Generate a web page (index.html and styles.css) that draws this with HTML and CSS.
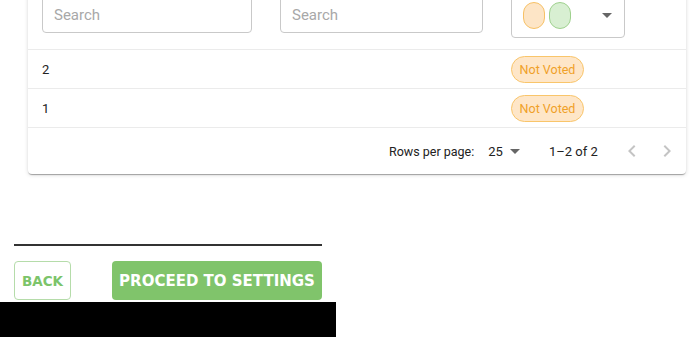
FILE: index.html
```html
<!DOCTYPE html>
<html>
<head>
<meta charset="utf-8">
<link rel="stylesheet" href="styles.css">
</head>
<body>
<div class="card">
  <div class="row filters">
    <div class="cell c1"><div class="input">Search</div></div>
    <div class="cell c2"><div class="input">Search</div></div>
    <div class="cell c3">
      <div class="select">
        <span class="chip orange"></span><span class="chip green"></span>
        <span class="caret"></span>
      </div>
    </div>
  </div>
  <div class="row data">
    <div class="cell c1">2</div>
    <div class="cell c2"></div>
    <div class="cell c3"><span class="badge">Not Voted</span></div>
  </div>
  <div class="row data">
    <div class="cell c1">1</div>
    <div class="cell c2"></div>
    <div class="cell c3"><span class="badge">Not Voted</span></div>
  </div>
  <div class="footer">
    <span class="label">Rows per page:</span>
    <span class="per">25</span><span class="caret small"></span>
    <span class="range">1–2 of 2</span>
    <svg class="nav prev" width="24" height="24" viewBox="0 0 24 24"><path d="M15.41 7.41 14 6l-6 6 6 6 1.41-1.41L10.83 12z" fill="#c4c4c4"/></svg>
    <svg class="nav next" width="24" height="24" viewBox="0 0 24 24"><path d="M10 6 8.59 7.41 13.17 12l-4.58 4.59L10 18l6-6z" fill="#c4c4c4"/></svg>
  </div>
</div>
<div class="actions">
  <div class="rule"></div>
  <div class="buttons">
    <button class="btn back">BACK</button>
    <button class="btn proceed">PROCEED TO SETTINGS</button>
  </div>
</div>
<div class="blackbar"></div>
</body>
</html>
```
FILE: styles.css
```css
html, body { margin: 0; padding: 0; background: #ffffff; overflow: hidden; }
body { font-family: Roboto, "Liberation Sans", sans-serif; width: 700px; height: 337px; }

.card {
  margin: -16px 0 0 28px;
  width: 658px;
  background: #fff;
  border-radius: 4px;
  box-shadow: 0 2px 1px -1px rgba(0,0,0,0.2), 0 1px 1px 0 rgba(0,0,0,0.14), 0 1px 4px 0 rgba(0,0,0,0.14);
}
.row { display: flex; border-bottom: 1px solid #ebebeb; }
.cell { box-sizing: border-box; padding: 0 14px; display: flex; align-items: center; font-size: 13px; color: #222; }
.c1 { width: 238px; }
.c2 { width: 231px; }
.c3 { flex: 1; }

.filters { height: 65px; align-items: flex-start; }
.filters .cell { align-items: flex-start; }
.input {
  box-sizing: border-box;
  width: 210px; height: 40px; margin-top: 9px;
  border: 1px solid #c9c9c9; border-radius: 4px;
  padding: 4px 11px 0; display: flex; align-items: center;
  font-size: 15px; color: #a8a8a8;
}
.c2 .input { width: 203px; }
.select {
  box-sizing: border-box; position: relative;
  width: 114px; height: 46px; margin-top: 8px;
  border: 1px solid #c9c9c9; border-radius: 4px;
  display: flex; align-items: center; gap: 4px; padding: 0 0 0 11px;
}
.chip { width: 22px; height: 27px; border-radius: 11px; box-sizing: border-box; }
.chip.orange { background: #fde5c6; border: 1px solid #f7c165; }
.chip.green { background: #d8efd2; border: 1px solid #9fd18e; }
.caret {
  width: 0; height: 0; border-left: 5px solid transparent; border-right: 5px solid transparent;
  border-top: 5px solid #666; margin-left: auto; margin-right: 12px;
}

.data { height: 38px; }
.data .cell { height: 38px; }
.badge {
  box-sizing: border-box; display: inline-flex; align-items: center; justify-content: center;
  width: 73px; height: 27px; border-radius: 14px;
  background: #fee6c8; border: 1px solid #f9c56a; color: #f0a128; font-size: 12.5px;
}

.footer {
  height: 46px; display: flex; align-items: center; font-size: 12.5px; color: #222;
  padding-left: 361px;
}
.label { margin-right: 14px; }
.per { font-size: 13px; }
.caret.small { margin-left: 7px; margin-right: 0; border-top-color: #666; }
.range { margin-left: 29px; font-size: 13px; }
.nav.prev { margin-left: 22px; }
.nav.next { margin-left: 11px; }

.actions { width: 308px; margin: 70px 0 0 14px; }
.rule { height: 2px; background: #333; }
.buttons { display: flex; justify-content: space-between; margin-top: 15px; }
.btn {
  font-family: "DejaVu Sans", sans-serif; font-weight: bold; font-size: 15px;
  height: 39px; border-radius: 4px; box-sizing: border-box; cursor: pointer; padding: 0;
}
.back { width: 57px; background: #fff; border: 1px solid #b5dcaa; color: #7cc46a; font-size: 13.5px; }
.proceed { width: 210px; background: #80c46b; border: none; color: #fff; }
.blackbar { width: 336px; height: 40px; background: #000; margin-top: 2px; }
```
